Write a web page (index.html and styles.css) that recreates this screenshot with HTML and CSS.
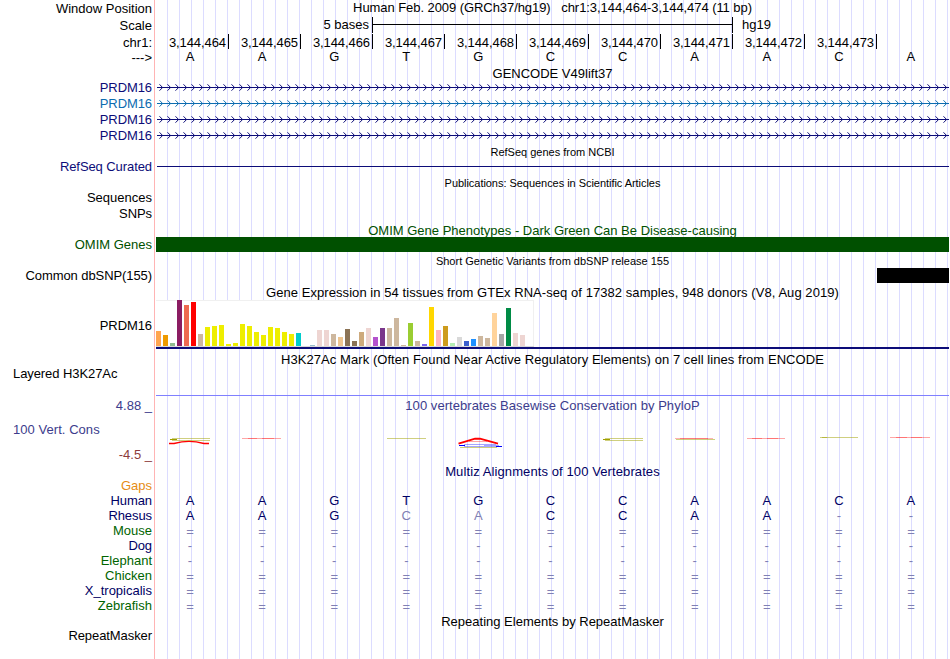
FILE: index.html
```html
<!DOCTYPE html>
<html lang="en">
<head>
<meta charset="utf-8">
<title>Genome Browser chr1:3,144,464-3,144,474</title>
<link rel="stylesheet" href="styles.css">
</head>
<body>
<svg class="defs" aria-hidden="true">
  <defs>
    <pattern id="arrows-navy" x="3" y="0" width="8" height="16" patternUnits="userSpaceOnUse">
      <path class="chevron navy" d="M0.5 4.3L3.6 7.5L0.5 10.7"/>
    </pattern>
    <pattern id="arrows-blue" x="3" y="0" width="8" height="16" patternUnits="userSpaceOnUse">
      <path class="chevron blue" d="M0.5 4.3L3.6 7.5L0.5 10.7"/>
    </pattern>
  </defs>
</svg>
<main class="browser">
  <div class="row h17"><div class="label drop1">Window Position</div><div class="track title t-position">Human Feb. 2009 (GRCh37/hg19)&nbsp;&nbsp; chr1:3,144,464-3,144,474 (11 bp)</div></div>
  <div class="row h17"><div class="label drop1">Scale</div><div class="track scale"><span class="scale-size">5 bases</span><span class="ruler"></span><span class="assembly">hg19</span></div></div>
  <div class="row h15"><div class="label drop1">chr1:</div><div class="track"><div class="coords" id="coords"></div></div></div>
  <div class="row h17"><div class="label drop1">---&gt;</div><div class="track"><div class="bases black" data-bases="AAGTGCCAACA"></div></div></div>

  <div class="row h14"><div class="label"></div><div class="track title">GENCODE V49lift37</div></div>
  <div class="row h16"><div class="label tight c-navy">PRDM16</div><div class="track"><svg class="gene"><path class="navy" d="M1 7.5H793"/><rect x="1" width="792" height="16" fill="url(#arrows-navy)"/></svg></div></div>
  <div class="row h16"><div class="label tight c-blue">PRDM16</div><div class="track"><svg class="gene"><path class="blue" d="M1 7.5H793"/><rect x="1" width="792" height="16" fill="url(#arrows-blue)"/></svg></div></div>
  <div class="row h16"><div class="label tight c-navy">PRDM16</div><div class="track"><svg class="gene"><path class="navy" d="M1 7.5H793"/><rect x="1" width="792" height="16" fill="url(#arrows-navy)"/></svg></div></div>
  <div class="row h16"><div class="label tight c-navy">PRDM16</div><div class="track"><svg class="gene"><path class="navy" d="M1 7.5H793"/><rect x="1" width="792" height="16" fill="url(#arrows-navy)"/></svg></div></div>

  <div class="row h15"><div class="label"></div><div class="track title small">RefSeq genes from NCBI</div></div>
  <div class="row h16"><div class="label tight c-navy">RefSeq Curated</div><div class="track"><svg class="gene"><path class="navy" d="M1 7.5H793"/></svg></div></div>

  <div class="row h15"><div class="label"></div><div class="track title small t-pubs">Publications: Sequences in Scientific Articles</div></div>
  <div class="row h16"><div class="label">Sequences</div><div class="track"></div></div>
  <div class="row h16"><div class="label tight">SNPs</div><div class="track"></div></div>

  <div class="row h15"><div class="label"></div><div class="track title drop1 c-green">OMIM Gene Phenotypes - Dark Green Can Be Disease-causing</div></div>
  <div class="row h16"><div class="label c-green">OMIM Genes</div><div class="track"><div class="block omim"></div></div></div>

  <div class="row h15"><div class="label"></div><div class="track title small">Short Genetic Variants from dbSNP release 155</div></div>
  <div class="row h16"><div class="label tight">Common dbSNP(155)</div><div class="track"><div class="block snp"></div></div></div>

  <div class="row h16"><div class="label"></div><div class="track title drop1 t-wide">Gene Expression in 54 tissues from GTEx RNA-seq of 17382 samples, 948 donors (V8, Aug 2019)</div></div>
  <div class="row h49"><div class="label tight drop18">PRDM16</div><div class="track gtex"><div class="bars" id="bars"></div></div></div>

  <div class="row h16"><div class="label"></div><div class="track title drop3 t-wide">H3K27Ac Mark (Often Found Near Active Regulatory Elements) on 7 cell lines from ENCODE</div></div>
  <div class="row h31"><div class="label left tight drop1">Layered H3K27Ac</div><div class="track baseline"></div></div>

  <div class="row h66">
    <div class="label cons">
      <div class="limit c-slate">4.88 _</div>
      <div class="name c-slate">100 Vert. Cons</div>
      <div class="limit c-brown">-4.5 _</div>
    </div>
    <div class="track title drop2 c-slate conservation">
      <div class="t-phylo">100 vertebrates Basewise Conservation by PhyloP</div>
      <svg class="logo" viewBox="156 430 793 20" fill="none">
        <g class="olive"><path d="M172 438.5H210M172 440.5H210"/><path class="strong" d="M170 439.5H177"/></g>
        <path class="red heavy" d="M169 443.5H174Q182 441.3 189 441.3T204 443.5H209"/>
        <path class="red light" d="M242 438.5H281"/><path class="red mid" d="M248 438.5H257M262 438.5H274"/>
        <path class="olive" d="M387 438.5H426"/>
        <path class="red peak" d="M458.5 443.7L475 438.7H480L498 443.7"/>
        <path class="red light" d="M469 441.5H487"/>
        <g class="blueish"><path d="M464 444.5H496M464 446.5H501M484 445.5H499"/><path class="strong" d="M459 445.5H465M496 446.5H502"/></g>
        <path class="olive" d="M460 447.5H497"/>
        <g class="olive"><path d="M605 438.5H643M605 440.5H643"/><path class="strong" d="M603 439.5H610"/></g>
        <path class="red mid" d="M675 438.5H713M680 438.5H708"/><path class="olive" d="M676 439.5H715"/>
        <path class="red light" d="M747 438.5H785"/><path class="red mid" d="M752 438.5H762M767 438.5H778"/>
        <path class="olive" d="M820 437.5H858"/><path class="olive" d="M822 437.5H827"/>
        <path class="red light" d="M890 437.5H930"/><path class="red mid" d="M896 437.5H907M911 437.5H922"/>
      </svg>
    </div>
  </div>

  <div class="row h16"><div class="label"></div><div class="track title drop2 c-deep t-multiz">Multiz Alignments of 100 Vertebrates</div></div>
  <div class="row h15"><div class="label c-orange">Gaps</div><div class="track"></div></div>
  <div class="row h15"><div class="label tight c-deep">Human</div><div class="track"><div class="bases" data-bases="AAGTGCCAACA"></div></div></div>
  <div class="row h15"><div class="label tight c-deep">Rhesus</div><div class="track"><div class="bases" data-bases="AAGcaCCAA--"></div></div></div>
  <div class="row h15"><div class="label c-forest">Mouse</div><div class="track"><div class="bases" data-bases="==========="></div></div></div>
  <div class="row h15"><div class="label tight c-deep">Dog</div><div class="track"><div class="bases" data-bases="-----------"></div></div></div>
  <div class="row h15"><div class="label c-forest">Elephant</div><div class="track"><div class="bases" data-bases="-----------"></div></div></div>
  <div class="row h15"><div class="label c-forest">Chicken</div><div class="track"><div class="bases" data-bases="==========="></div></div></div>
  <div class="row h15"><div class="label c-deep">X_tropicalis</div><div class="track"><div class="bases" data-bases="==========="></div></div></div>
  <div class="row h15"><div class="label c-forest">Zebrafish</div><div class="track"><div class="bases" data-bases="==========="></div></div></div>

  <div class="row h15"><div class="label"></div><div class="track title drop1">Repeating Elements by RepeatMasker</div></div>
  <div class="row fill"><div class="label tight">RepeatMasker</div><div class="track"></div></div>
</main>
<script src="tracks.js"></script>
</body>
</html>
```
FILE: styles.css
```css
* { box-sizing: border-box; }
body { margin: 0; background: #fff; }
.defs { display: block; width: 0; height: 0; }
.browser {
  width: 949px;
  height: 659px;
  display: flex;
  flex-direction: column;
  overflow: hidden;
  font: 13px/16px "Liberation Sans", Arial, sans-serif;
  color: #000;
  white-space: nowrap;
}

/* One row per label and track; the guide lines run through every track */
.row { display: grid; grid-template-columns: 155px 793px; column-gap: 1px; flex: none; }
.label { border-right: 1px solid #ffb4b4; padding-right: 2px; text-align: right; }
.label.left { text-align: left; padding-left: 13px; }
.label.tight { letter-spacing: -0.08px; }
.track {
  min-width: 0;
  background: repeating-linear-gradient(to right, transparent 0 11px, #dcdcff 11px 12px);
}
.title { text-align: center; }
.small { font-size: 11px; }
.t-position { letter-spacing: -0.065px; }
.t-wide { letter-spacing: 0.062px; }
.t-phylo { letter-spacing: 0.05px; }
.t-multiz { letter-spacing: 0.1px; }
.t-pubs { letter-spacing: -0.04px; }

.h14 { height: 14px; }
.h15 { height: 15px; }
.h16 { height: 16px; }
.h17 { height: 17px; }
.h31 { height: 31px; }
.h49 { height: 49px; }
.h66 { height: 66px; }
.fill { flex: 1; }
.drop1 { padding-top: 1px; }
.drop2 { padding-top: 2px; }
.drop3 { padding-top: 3px; }
.drop18 { padding-top: 18px; }

.c-navy { color: #0c0c78; }
.c-blue { color: #0c6cb0; }
.c-green { color: #005000; }
.c-slate { color: #3c3c8c; }
.c-brown { color: #8c3c3c; }
.c-orange { color: #e68c14; }
.c-deep { color: #000064; }
.c-forest { color: #006400; }

/* Scale and coordinates */
.scale { display: flex; }
.scale-size { width: 213px; text-align: right; margin-right: 3px; }
.ruler {
  width: 361px;
  height: 16px;
  border: solid #000;
  border-width: 0 1px;
  background: linear-gradient(#000, #000) 0 7px / 100% 1px no-repeat;
}
.assembly { margin-left: 9px; }
.coords { display: flex; margin-left: 1px; letter-spacing: -0.08px; }
.coords span { width: 72px; height: 15px; border-right: 1px solid #000; padding: 1px 2px 0 0; text-align: right; }

.bases { display: grid; grid-template-columns: repeat(11, 1fr); margin-left: -2px; width: 793px; text-align: center; color: #000064; }
.bases.black { color: #000; }
.bases .diff { color: #8080b4; }
.bases .unaligned { padding-top: 1px; }

/* Genes and blocks */
.gene { display: block; width: 793px; height: 16px; }
.gene path, .chevron { fill: none; stroke-width: 1; }
.navy { stroke: #0c0c78; }
.blue { stroke: #0c6cb0; }
.block { height: 15px; }
.omim { background: #005000; }
.snp { width: 72px; margin-left: 721px; background: #000; }

/* Expression graph */
.gtex { border-bottom: 2px solid #0c0c78; }
.bars {
  display: flex;
  align-items: flex-end;
  gap: 2px;
  width: 378px;
  height: 47px;
  background: #fff;
  border-bottom: 1px solid #d8d8d8;
  box-shadow: inset 0 1px #f0f0f0, inset -1px 0 #f0f0f0;
}
.bars i { width: 5px; }
.baseline { border-bottom: 1px solid #8080ff; }

/* Conservation */
.cons { padding-top: 2px; }
.cons .name { text-align: left; padding-left: 13px; margin: 8px 0 9px; letter-spacing: 0.05px; }
.logo { display: block; width: 793px; height: 20px; margin-top: 16px; }
.olive { stroke: #a0a000; stroke-opacity: .5; }
.strong { stroke-opacity: 1; }
.red { stroke: #f00; }
.heavy { stroke-width: 1.3; }
.peak { stroke-width: 1.9; }
.light { stroke-opacity: .35; stroke-width: 1; }
.mid { stroke-opacity: .3; }
.blueish { stroke: #00f; stroke-opacity: .35; }
```
FILE: tracks.js
```js
// Coordinate ticks
const coords = document.getElementById('coords');
for (let p = 464; p <= 473; p++) {
  const s = document.createElement('span');
  s.textContent = '3,144,' + p;
  coords.append(s);
}

// Aligned bases; lower case marks a mismatch with the human base
document.querySelectorAll('[data-bases]').forEach(row => {
  for (const c of row.dataset.bases) {
    const s = document.createElement('span');
    s.textContent = c.toUpperCase();
    if (/[a-z=-]/.test(c)) s.classList.add('diff');
    if (c === '=') s.classList.add('unaligned');
    row.append(s);
  }
});

// Median expression per tissue: [height, colour]
const Y = '#eeee00', T = '#cdb79e', P = '#eed5d2';
const tissues = [
  [15, '#ffa54f'], [11, '#ee9a00'], [3, '#8fbc8f'], [46, '#8b1c62'], [41, '#ee6a50'], [44, '#ff0000'], [12, T],
  [19, Y], [20, Y], [21, Y], [2, Y], [3, Y], [22, Y], [20, Y], [14, Y], [11, Y], [19, Y], [18, Y], [14, Y], [12, Y],
  [13, '#00cdcd'], [0, P], [1, '#9ac0cd'], [16, P], [16, P], [12, T], [9, '#eec591'], [17, '#8b7355'],
  [5, '#8b7355'], [14, '#cdaa7d'], [18, P], [9, '#b452cd'], [18, '#7a378b'], [18, T], [28, T], [1, T],
  [23, '#9acd32'], [5, T], [2, '#7a67ee'], [39, '#ffd700'], [16, '#ffb6c1'], [20, '#cd9b1d'], [3, '#b4eeb4'],
  [9, '#d9d9d9'], [5, '#3a5fcd'], [7, '#1e90ff'], [10, T], [8, T], [33, '#ffd39b'], [12, '#a6a6a6'],
  [38, '#008b45'], [13, P], [11, P], [0, P]
];
const bars = document.getElementById('bars');
for (const [h, c] of tissues) {
  const i = document.createElement('i');
  i.style.height = h + 'px';
  i.style.background = c;
  bars.append(i);
}
```
